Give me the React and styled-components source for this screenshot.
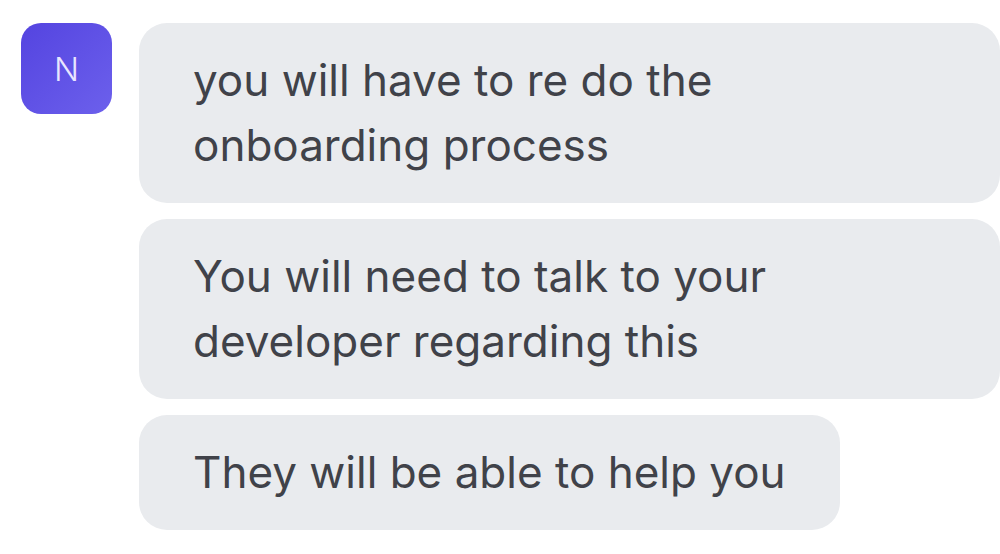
import React from "react";
import styled, { createGlobalStyle } from "styled-components";

const messages = [
  "you will have to re do the onboarding process",
  "You will need to talk to your developer regarding this",
  "They will be able to help you",
];

const App = () => {
  return (
    <>
      <GlobalStyle />
      <Thread>
        <Avatar>N</Avatar>
        <Bubbles>
          {messages.map((text) => (
            <Bubble key={text}>{text}</Bubble>
          ))}
        </Bubbles>
      </Thread>
    </>
  );
};

const GlobalStyle = createGlobalStyle`
  body {
    margin: 0;
    background: #ffffff;
    font-family: "Inter", "Noto Sans", sans-serif;
  }
`;

const Thread = styled.section`
  display: flex;
  align-items: flex-start;
  gap: 27px;
  padding: 23px 0 0 21px;
`;

const Avatar = styled.div`
  flex: none;
  width: 91px;
  height: 91px;
  border-radius: 20px;
  display: flex;
  align-items: center;
  justify-content: center;
  background: linear-gradient(135deg, #5444e0, #6c60ec);
  color: #e9e6ff;
  font-size: 33px;
  font-weight: 300;
`;

const Bubbles = styled.div`
  display: flex;
  flex-direction: column;
  align-items: flex-start;
  gap: 16px;
  max-width: 861px;
`;

const Bubble = styled.div`
  background: #e9ebee;
  border-radius: 28px;
  padding: 25px 54px;
  color: #404249;
  font-size: 44px;
  line-height: 65px;
`;

export default App;
